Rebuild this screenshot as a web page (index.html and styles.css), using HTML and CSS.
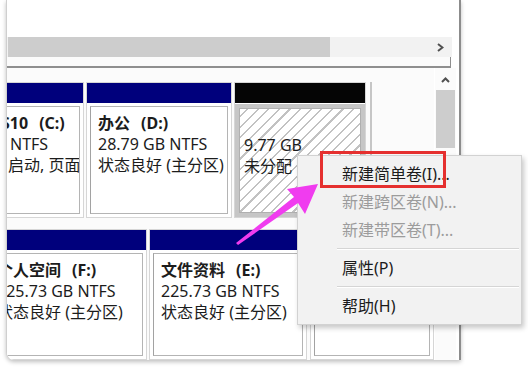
FILE: index.html
```html
<!DOCTYPE html>
<html>
<head>
  <title>磁盘管理</title>
  <link rel="stylesheet" href="styles.css">
</head>
<body>
  <div class="window">
    <div class="top-pane"></div>
    <div class="hscroll">
      <div class="hthumb"></div>
      <svg class="harrow" width="7" height="9" viewBox="0 0 7 9"><polyline points="1,1 5.5,4.5 1,8" /></svg>
    </div>
    <div class="splitter"></div>
    <div class="lower">
      <div class="disks">
        <div class="disk-row row1">
          <div class="vol vol-c">
            <div class="bar"></div>
            <div class="body">
              <div class="line name c1">S10<span class="drv">(C:)</span></div>
              <div class="line c2">NTFS</div>
              <div class="line c3">启动, 页面</div>
            </div>
          </div>
          <div class="vol vol-d">
            <div class="bar"></div>
            <div class="body">
              <div class="line name">办公<span class="drv">(D:)</span></div>
              <div class="line">28.79 GB NTFS</div>
              <div class="line">状态良好 (主分区)</div>
            </div>
          </div>
          <div class="vol vol-u">
            <div class="bar black"></div>
            <div class="body hatch">
              <div class="line">&nbsp;</div>
              <div class="line">9.77 GB</div>
              <div class="line">未分配</div>
            </div>
          </div>
          <div class="row-end"></div>
        </div>
        <div class="disk-row row2">
          <div class="vol vol-f">
            <div class="bar"></div>
            <div class="body">
              <div class="line name">个人空间<span class="drv">(F:)</span></div>
              <div class="line">225.73 GB NTFS</div>
              <div class="line">状态良好 (主分区)</div>
            </div>
          </div>
          <div class="vol vol-e">
            <div class="bar"></div>
            <div class="body">
              <div class="line name">文件资料<span class="drv">(E:)</span></div>
              <div class="line">225.73 GB NTFS</div>
              <div class="line">状态良好 (主分区)</div>
            </div>
          </div>
          <div class="vol vol-x">
            <div class="bar"></div>
            <div class="body"></div>
          </div>
        </div>
      </div>
      <div class="vscroll">
        <svg class="varrow" width="9" height="6" viewBox="0 0 9 6"><polyline points="1,5 4.5,1.5 8,5" /></svg>
        <div class="vthumb"></div>
      </div>
    </div>
  </div>

  <div class="menu">
    <div class="item">新建简单卷(I)...</div>
    <div class="item off">新建跨区卷(N)...</div>
    <div class="item off">新建带区卷(T)...</div>
    <div class="sep"></div>
    <div class="item">属性(P)</div>
    <div class="sep"></div>
    <div class="item">帮助(H)</div>
    <div class="mark"></div>
  </div>

  <svg class="pointer" width="528" height="367" viewBox="0 0 528 367">
    <polygon points="236,243 294,197 287,189 318,184 305,214 298,203 238,245" />
  </svg>
</body>
</html>
```

FILE: styles.css
```css
* { box-sizing: border-box; }
body {
  margin: 0; width: 528px; height: 367px; overflow: hidden;
  background: #fff; position: relative;
  font-family: "Noto Sans", "Noto Sans CJK SC", sans-serif;
  font-size: 16px; color: #1c1c1c;
}
.window {
  margin-left: 6px; width: 455px; height: 360px;
  border-left: 1px solid #cfcfcf; border-right: 2px solid #8c8c8c;
  border-radius: 0 0 0 8px; box-shadow: 0 2px 4px rgba(0,0,0,0.25);
  background: #fff; overflow: hidden;
}
.top-pane { height: 37px; background: #fff; }
.hscroll {
  height: 20px; margin-right: 7px;
  display: flex; align-items: center;
  background: #f2f2f2;
}
.hthumb { margin-left: 1px; width: 322px; height: 20px; background: #cdcdcd; }
.harrow { margin-left: auto; margin-right: 8px; }
.harrow polyline, .varrow polyline {
  fill: none; stroke: #505050; stroke-width: 2;
}
.splitter {
  height: 11px; margin-right: 8px;
  border-bottom: 2px solid #8f8f8f; border-right: 1px solid #8f8f8f;
  background: #fbfbfb;
}
.lower { display: flex; height: 292px; }
.disks { width: 427px; overflow: hidden; background: #fbfbfb; }
.disk-row { display: flex; gap: 2px; }
.row1 { height: 136px; margin-top: 14px; }
.row2 { height: 131px; margin-top: 11px; }
.vol {
  flex: none; display: flex; flex-direction: column;
  border: 1px solid #d6d6d6; background: #fff;
}
.bar { height: 20px; flex: none; background: #00007c; }
.bar.black { background: #050505; }
.body {
  flex: 1; margin: 3px; padding: 6px 0 0 7px;
  border: 1px solid #b4b4b4; border-left-color: #a2a2a2;
  overflow: hidden; white-space: nowrap;
}
.line { line-height: 21px; }
.name { font-weight: 700; }
.drv { margin-left: 11px; }
.vol-c { width: 90px; margin-left: -13px; }
.vol-c .body { padding-left: 0; }
.c1 { text-indent: 2px; }
.c2 { text-indent: 11px; }
.c3 { text-indent: 9px; }
.vol-d { width: 146px; }
.vol-u { width: 132px; }
.vol-u .body {
  margin: 1px 0 0; padding-left: 5px;
  border: 4px solid #c6c6c6;
  box-shadow: inset 0 0 0 1px #b0b0b0;
}
.hatch {
  background: repeating-linear-gradient(135deg, #fff 0 6px, #c2c2c2 6px 7.5px);
}
.row-end { width: 2px; margin-left: 2px; background: #c6c6c6; }
.vol-f { width: 162px; margin-left: -22px; }
.vol-e { width: 158px; }
.vol-x { width: 124px; margin-left: 1px; }
.vscroll {
  width: 21px; margin-left: 1px;
  display: flex; flex-direction: column; align-items: center;
  background: #fbfbfb;
}
.varrow { margin-top: 9px; }
.vthumb { margin-top: 7px; width: 19px; height: 58px; background: #cdcdcd; }

.menu {
  position: absolute; left: 297px; top: 155px;
  width: 225px; padding: 4px 0;
  background: #f2f2f2; border: 1px solid #d2d2d2;
  box-shadow: 2px 3px 5px rgba(0,0,0,0.22);
}
.item { height: 28px; line-height: 28px; padding-left: 44px; color: #1b1b1b; }
.item.off { color: #9c9c9c; }
.sep { height: 10px; margin: 0 2px 0 39px; position: relative; }
.sep::after {
  content: ""; position: absolute; left: 0; right: 0; top: 4px;
  border-top: 1px solid #d5d5d5; border-bottom: 1px solid #fff;
}
.mark {
  position: absolute; left: 22px; top: -5px;
  width: 126px; height: 37px;
  border: 3px solid #e5302f;
}
.pointer { position: absolute; left: 0; top: 0; }
.pointer polygon { fill: #f03cef; }
```
